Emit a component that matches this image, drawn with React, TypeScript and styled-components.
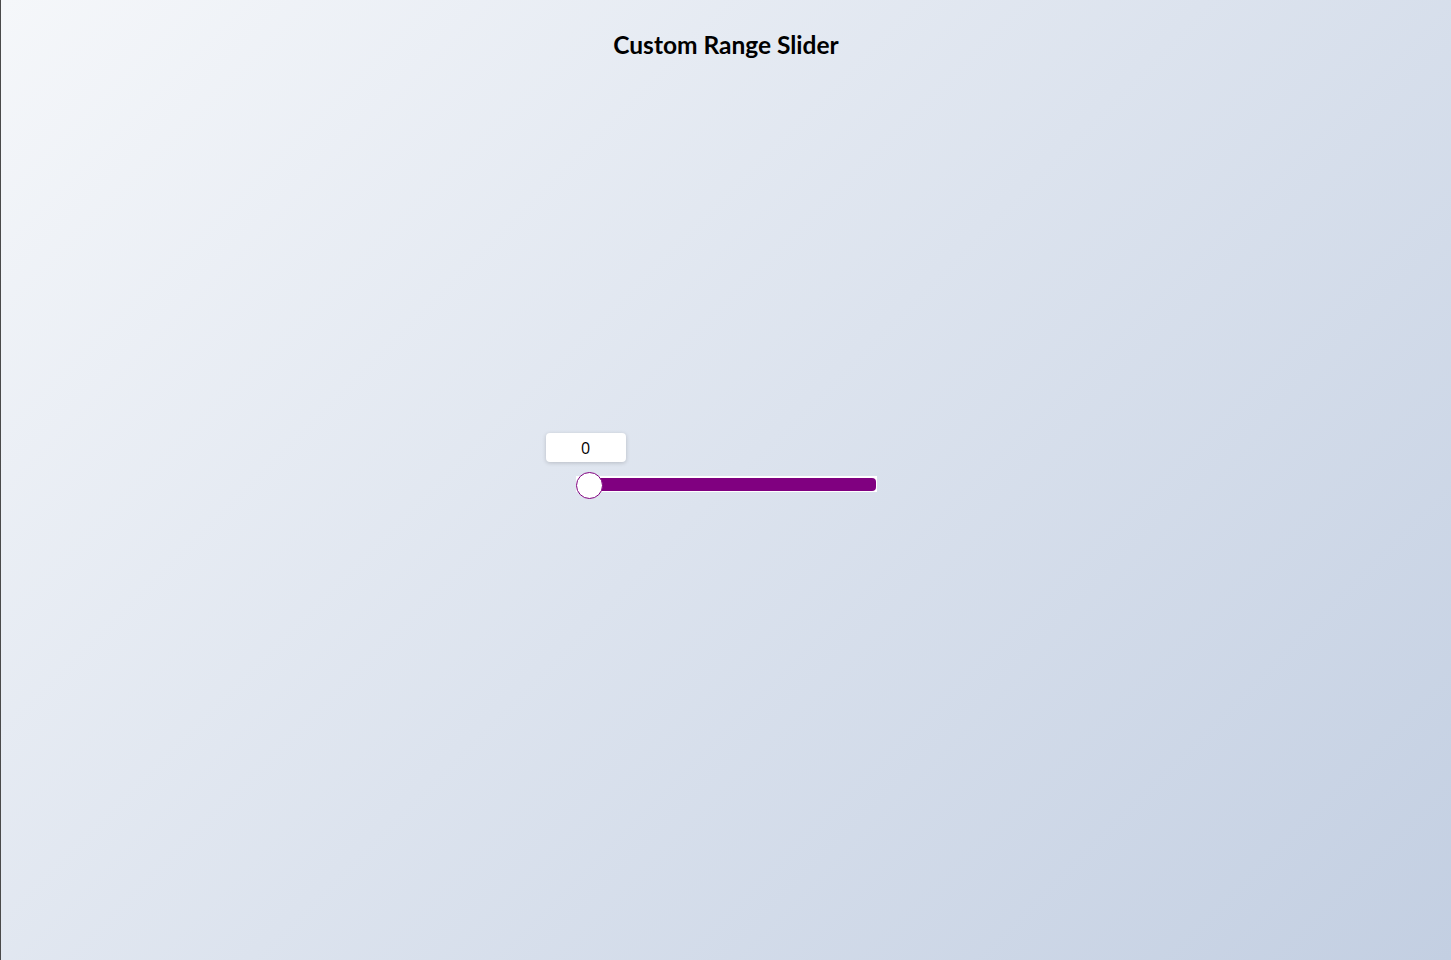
import React, { useState } from "react";
import styled, { createGlobalStyle } from "styled-components";

const GlobalStyle = createGlobalStyle`
  html, body {
    margin: 0;
    padding: 0;
  }
  body {
    font-family: Lato, "Open Sans", sans-serif;
  }
`;

const Page = styled.div`
  min-height: 100vh;
  box-sizing: border-box;
  border-left: 1px solid #4a4a4a;
  background: linear-gradient(135deg, #f5f7fa 0%, #c3cfe2 100%);
  display: flex;
  flex-direction: column;
  align-items: center;
`;

const Title = styled.h1`
  margin: 0;
  padding-top: 30px;
  font-size: 24.5px;
  line-height: 30px;
  font-weight: 700;
  color: #000;
`;

const Stage = styled.div`
  padding-top: 373px;
  display: flex;
  flex-direction: column;
`;

const ValueBox = styled.div`
  width: 80px;
  height: 29px;
  margin-left: -30px;
  margin-bottom: 14px;
  background: #fff;
  border-radius: 4px;
  box-shadow: 0 1px 4px rgba(0, 0, 0, 0.18);
  display: flex;
  align-items: center;
  justify-content: center;
  font-family: "Open Sans", sans-serif;
  font-size: 16px;
  color: #000;
`;

const Track = styled.div`
  position: relative;
  width: 301px;
  height: 16px;
  box-sizing: border-box;
  padding: 2px 1px 1px 2px;
  background: #fff;
`;

const Fill = styled.div`
  height: 100%;
  background: #800080;
  border-radius: 4px;
`;

const Thumb = styled.div`
  position: absolute;
  top: -4px;
  width: 27px;
  height: 27px;
  box-sizing: border-box;
  border-radius: 50%;
  background: #fff;
  border: 1px solid #800080;
`;

export default function App() {
  const [value] = useState(0);
  const pct = value / 100;

  return (
    <>
      <GlobalStyle />
      <Page>
        <Title>Custom Range Slider</Title>
        <Stage>
          <ValueBox>{value}</ValueBox>
          <Track>
            <Fill />
            <Thumb style={{ left: `${pct * (301 - 27)}px` }} />
          </Track>
        </Stage>
      </Page>
    </>
  );
}
